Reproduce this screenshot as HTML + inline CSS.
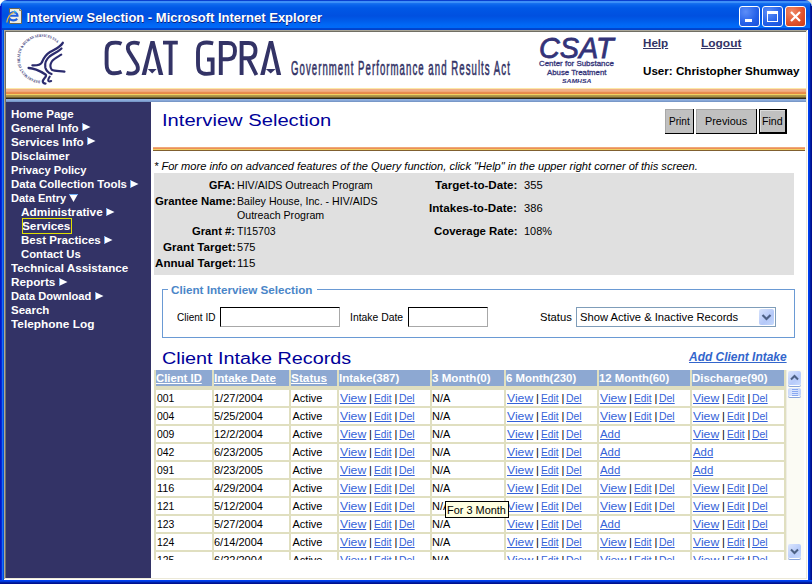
<!DOCTYPE html>
<html><head><meta charset="utf-8"><title>Interview Selection</title>
<style>
html,body{margin:0;padding:0;}
body{width:812px;height:584px;position:relative;overflow:hidden;background:#fff;font-family:"Liberation Sans",sans-serif;font-size:11px;color:#000;}
.r{position:absolute;box-sizing:content-box;}
.t{position:absolute;white-space:nowrap;}
.a{color:#3355cc;text-decoration:underline;}
</style></head><body>
<div class="r" style="left:804px;top:0px;width:8px;height:8px;background:#ece9d8"></div>
<div class="r" style="left:0px;top:0px;width:812px;height:30px;background:linear-gradient(to bottom,#0a3fcf 0px,#0a3fcf 1px,#3d8ff8 1px,#3d8ff8 3px,#1a74f0 3px,#0a64ec 5px,#0058e6 8px,#0050e0 16px,#005ae8 20px,#0068f6 25px,#006af8 28px,#0048d4 28px,#0040c8 30px);border-radius:7px 7px 0 0;"></div>
<div class="r" style="left:0px;top:6px;width:1px;height:578px;background:#0018c8"></div>
<div class="r" style="left:1px;top:4px;width:1px;height:580px;background:#0828d4"></div>
<div class="r" style="left:2px;top:30px;width:1px;height:554px;background:#1a6ef2"></div>
<div class="r" style="left:3px;top:30px;width:1px;height:554px;background:#0050e0"></div>
<div class="r" style="left:808px;top:30px;width:1px;height:554px;background:#0040f0"></div>
<div class="r" style="left:809px;top:30px;width:1px;height:554px;background:#0036d8"></div>
<div class="r" style="left:810px;top:4px;width:1px;height:580px;background:#0020a4"></div>
<div class="r" style="left:811px;top:6px;width:1px;height:578px;background:#001090"></div>
<div class="r" style="left:0px;top:580px;width:812px;height:1px;background:#0040f0"></div>
<div class="r" style="left:0px;top:581px;width:812px;height:1px;background:#0036d8"></div>
<div class="r" style="left:0px;top:582px;width:812px;height:1px;background:#0020a4"></div>
<div class="r" style="left:0px;top:583px;width:812px;height:1px;background:#001090"></div>
<div class="r" style="left:4px;top:30px;width:804px;height:1px;background:#aca899"></div>
<div class="r" style="left:4px;top:31px;width:803px;height:1px;background:#716f64"></div>
<div class="r" style="left:4px;top:30px;width:1px;height:550px;background:#aca899"></div>
<div class="r" style="left:5px;top:31px;width:1px;height:548px;background:#716f64"></div>
<div class="r" style="left:806px;top:31px;width:1px;height:548px;background:#ece9d8"></div>
<div class="r" style="left:807px;top:30px;width:1px;height:550px;background:#ffffff"></div>
<div class="r" style="left:5px;top:578px;width:802px;height:1px;background:#ece9d8"></div>
<div class="r" style="left:4px;top:579px;width:804px;height:1px;background:#ffffff"></div>
<div class="r" style="left:6px;top:32px;width:800px;height:546px;background:#fff"></div>
<svg class="r" style="left:2px;top:4px" width="24" height="24" viewBox="0 0 24 24">
<path d="M7.5 4.5 H17.5 L19.5 6.5 V19.5 H7.5 Z" fill="#efede2" stroke="#6b6753" stroke-width="1"/>
<path d="M17.5 4.5 V6.5 H19.5" fill="#fff" stroke="#6b6753" stroke-width="0.8"/>
<path d="M15.2 14.8 C13.5 16.8 9.5 17 7.8 15 C6 12.8 7 9 10.5 8.3 C13.5 7.8 15.5 9.5 15.5 11.8 H7.2" fill="none" stroke="#1f5ee0" stroke-width="2.1"/>
<path d="M4.8 18.5 C5.5 13.5 8.5 9.5 12.5 8" fill="none" stroke="#e0b840" stroke-width="1.2"/>
<path d="M12 6.8 L14.5 8.5" stroke="#30c0f0" stroke-width="1.2"/>
</svg>
<div class="t" style="left:27px;top:11px;font-size:13px;line-height:15px;color:#0a1e80;font-weight:bold;">Interview Selection - Microsoft Internet Explorer</div>
<div class="t" style="left:26.5px;top:10px;font-size:13px;line-height:15px;color:#fff;font-weight:bold;">Interview Selection - Microsoft Internet Explorer</div>
<div class="r" style="left:739px;top:6px;width:19px;height:19px;border:1px solid #fff;border-radius:3px;background:radial-gradient(circle at 30% 25%,#5d8ef8,#2460e8 60%,#1a50d8)"><div class="r" style="left:5px;top:12px;width:7px;height:3px;background:#fff"></div></div>
<div class="r" style="left:762px;top:6px;width:19px;height:19px;border:1px solid #fff;border-radius:3px;background:radial-gradient(circle at 30% 25%,#5d8ef8,#2460e8 60%,#1a50d8)"><div class="r" style="left:4px;top:4px;width:9px;height:7px;border:1px solid #fff;border-top-width:3px;"></div></div>
<div class="r" style="left:785px;top:6px;width:19px;height:19px;border:1px solid #fff;border-radius:3px;background:radial-gradient(circle at 30% 25%,#f08a68,#e0502a 60%,#c83c18)"><svg class="r" style="left:0;top:0" width="19" height="19"><path d="M5 5 L14 14 M14 5 L5 14" stroke="#fff" stroke-width="2.2"/></svg></div>
<svg class="r" style="left:10px;top:32px" width="60" height="56" viewBox="0 0 60 56">
<defs><path id="hhsring" d="M30.1 48.7 A22 22 0 1 1 48.3 12.1"/></defs>
<text font-family="Liberation Serif" font-size="4" font-weight="bold" fill="#2b2b6e"><textPath href="#hhsring" textLength="84" lengthAdjust="spacingAndGlyphs">DEPARTMENT OF HEALTH &amp; HUMAN SERVICES USA</textPath></text>
<g fill="none" stroke="#2b2b6e" stroke-linecap="round">
<path d="M22.4 33.4 C26 33.5 30 33.8 31.8 30.5 C33.2 27 35 23 40 20 C45 17 50 15.5 52.8 10.8" stroke-width="2.3"/>
<path d="M51.5 16.5 C48 20 43.5 21.5 39.5 24.5 C36 27.5 34.6 31.5 35.3 35.5 C36 38.5 38 40.5 41.5 42" stroke-width="2.2"/>
<path d="M51.3 22.7 C47.5 25 44 26.5 41.8 29.5 C40 32.5 40 35.5 41.8 37.8 C45 39.5 50 38.8 54.5 39.6" stroke-width="2.1"/>
<path d="M18.6 36 C23 36 30 39 35.5 42.5 C37.5 44 33.5 46.5 32.8 49 C32.5 50.5 34 51.6 35.5 51.6" stroke-width="2.3"/>
<path d="M39.8 44.5 C38.8 46 37.6 47.8 38.4 49 C39.2 49.6 40.5 49.3 41.2 49" stroke-width="2"/>
</g>
</svg>
<svg class="r" style="left:0;top:0" width="300" height="88" viewBox="0 0 300 88">
<g fill="none" stroke="#333366" stroke-width="3.9" stroke-linecap="butt">
<path d="M121.5 43.8 C118 42.2 114.5 42.5 111.5 43 C107.5 44 106.6 47 106.6 52 V64 C106.6 69 107.5 72 111.5 73 C114.5 73.6 118 73.4 121.5 71.8"/>
<path d="M139.5 43.6 C135.5 42.3 131.5 42.4 129.5 44 C127.5 45.5 127.6 48.5 128.6 51 L137.2 65 C138.4 68 138 71 135.5 72.5 C133 74 129.5 73.8 126.5 72.8"/>
<path d="M281 74.5 L271 41 M260 74.5 L270.6 41" stroke-width="0"/>
<path d="M207 59.5 H212.6 V73.2 C208 74.2 202 74 199.8 71.5 C198.3 70 198 67 198 63 V52 C198 47 199 44.5 201.5 43.5 C204.5 42.2 209 42.4 213.2 43.4"/>
<path d="M220.8 75 V43 H228 C233.5 43 235 46 235 51 C235 56 233.5 59.2 228 59.2 H220.8"/>
<path d="M241.6 75 V43 H248.5 C254 43 255.5 46 255.5 50.5 C255.5 55 254 58.2 248.5 58.2 H241.6 M248 58.2 L256.4 75"/>
<path d="M163 42.6 H177.8 M170.6 42.6 V75"/>
</g>
<g fill="#333366">
<path d="M150.5 41 H154.5 L163.3 75 H158.8 L152.3 48 L146 75 H141.6 Z"/>
<path d="M147.8 69 H156.6 L152.2 73.5 Z"/>
<path d="M268.9 41 H273 L281.2 75 H276.8 L270.8 48 L264.6 75 H260.2 Z"/>
<path d="M265.8 69 H275.6 L270.7 73.5 Z"/>
</g>
</svg>
<div class="t" style="left:291px;top:57px;font-size:20px;line-height:22px;color:#333366;letter-spacing:2.2px;transform:scaleX(0.4799);transform-origin:0 0;-webkit-text-stroke:0.6px #333366;">Government Performance and Results Act</div>
<div class="t" style="left:539px;top:32px;font-size:29px;line-height:32px;color:#333378;font-style:italic;transform:scaleX(0.9933);transform-origin:0 0;-webkit-text-stroke:0.8px #333378;">CSAT</div>
<div class="t" style="left:539px;top:59px;font-size:8px;line-height:9px;color:#333378;transform:scaleX(0.9893);transform-origin:0 0;-webkit-text-stroke:0.3px #333378;">Center for Substance</div>
<div class="t" style="left:547px;top:68px;font-size:8px;line-height:9px;color:#333378;transform:scaleX(0.9750);transform-origin:0 0;-webkit-text-stroke:0.3px #333378;">Abuse Treatment</div>
<div class="t" style="left:562px;top:78px;font-size:6px;line-height:6px;color:#333378;font-weight:bold;font-style:italic;transform:scaleX(1.1339);transform-origin:0 0;">SAMHSA</div>
<div class="t" style="left:643px;top:37px;font-size:11px;line-height:12px;color:#333366;font-weight:bold;transform:scaleX(1.0569);transform-origin:0 0;text-decoration:underline;">Help</div>
<div class="t" style="left:701px;top:37px;font-size:11px;line-height:12px;color:#333366;font-weight:bold;transform:scaleX(1.0841);transform-origin:0 0;text-decoration:underline;">Logout</div>
<div class="t" style="left:643px;top:65px;font-size:11px;line-height:12px;color:#000;font-weight:bold;transform:scaleX(1.0573);transform-origin:0 0;">User: Christopher Shumway</div>
<div class="r" style="left:6px;top:88px;width:800px;height:1px;background:#fce8a8"></div>
<div class="r" style="left:6px;top:89px;width:800px;height:1px;background:#f0b088"></div>
<div class="r" style="left:6px;top:90px;width:800px;height:1px;background:#f0b088"></div>
<div class="r" style="left:6px;top:91px;width:800px;height:1px;background:#f0a878"></div>
<div class="r" style="left:6px;top:92px;width:800px;height:1px;background:#e88c50"></div>
<div class="r" style="left:6px;top:93px;width:800px;height:1px;background:#e88848"></div>
<div class="r" style="left:6px;top:94px;width:800px;height:1px;background:#f0d060"></div>
<div class="r" style="left:6px;top:95px;width:800px;height:1px;background:#b09850"></div>
<div class="r" style="left:6px;top:96px;width:800px;height:1px;background:#a89040"></div>
<div class="r" style="left:6px;top:97px;width:800px;height:1px;background:#706030"></div>
<div class="r" style="left:6px;top:98px;width:800px;height:1px;background:#302818"></div>
<div class="r" style="left:6px;top:99px;width:800px;height:1px;background:#90b0e0"></div>
<div class="r" style="left:6px;top:100px;width:800px;height:1px;background:#88a8d8"></div>
<div class="r" style="left:6px;top:101px;width:800px;height:1px;background:#7898c8"></div>
<div class="r" style="left:6px;top:102px;width:145px;height:476px;background:#333366"></div>
<div class="t" style="left:11px;top:108px;font-size:11px;line-height:12px;color:#fff;font-weight:bold;transform:scaleX(1.0480);transform-origin:0 0;">Home Page</div>
<div class="t" style="left:11px;top:122px;font-size:11px;line-height:12px;color:#fff;font-weight:bold;transform:scaleX(1.0547);transform-origin:0 0;">General Info</div>
<svg class="r" style="left:82px;top:123px" width="9" height="8"><path d="M0 0 L8.5 4 L0 8 Z" fill="#fff"/><path d="M0.5 0 V8" stroke="#70b0f8" stroke-width="1"/></svg>
<div class="t" style="left:11px;top:136px;font-size:11px;line-height:12px;color:#fff;font-weight:bold;transform:scaleX(1.0616);transform-origin:0 0;">Services Info</div>
<svg class="r" style="left:87px;top:137px" width="9" height="8"><path d="M0 0 L8.5 4 L0 8 Z" fill="#fff"/><path d="M0.5 0 V8" stroke="#70b0f8" stroke-width="1"/></svg>
<div class="t" style="left:11px;top:150px;font-size:11px;line-height:12px;color:#fff;font-weight:bold;transform:scaleX(1.0493);transform-origin:0 0;">Disclaimer</div>
<div class="t" style="left:11px;top:164px;font-size:11px;line-height:12px;color:#fff;font-weight:bold;transform:scaleX(1.0119);transform-origin:0 0;">Privacy Policy</div>
<div class="t" style="left:11px;top:178px;font-size:11px;line-height:12px;color:#fff;font-weight:bold;transform:scaleX(1.0382);transform-origin:0 0;">Data Collection Tools</div>
<svg class="r" style="left:130px;top:180px" width="9" height="8"><path d="M0 0 L8.5 4 L0 8 Z" fill="#fff"/><path d="M0.5 0 V8" stroke="#70b0f8" stroke-width="1"/></svg>
<div class="t" style="left:11px;top:192px;font-size:11px;line-height:12px;color:#fff;font-weight:bold;transform:scaleX(1.0012);transform-origin:0 0;">Data Entry</div>
<svg class="r" style="left:69px;top:194px" width="9" height="8"><path d="M0 0 H9 L4.5 8 Z" fill="#fff"/><path d="M0 0.5 H9" stroke="#70b0f8" stroke-width="1"/></svg>
<div class="t" style="left:21px;top:206px;font-size:11px;line-height:12px;color:#fff;font-weight:bold;transform:scaleX(1.0691);transform-origin:0 0;">Administrative</div>
<svg class="r" style="left:106px;top:208px" width="9" height="8"><path d="M0 0 L8.5 4 L0 8 Z" fill="#fff"/><path d="M0.5 0 V8" stroke="#70b0f8" stroke-width="1"/></svg>
<div class="t" style="left:22px;top:220px;font-size:11px;line-height:12px;color:#fff;font-weight:bold;transform:scaleX(1.0692);transform-origin:0 0;">Services</div>
<div class="t" style="left:21px;top:234px;font-size:11px;line-height:12px;color:#fff;font-weight:bold;transform:scaleX(1.0524);transform-origin:0 0;">Best Practices</div>
<svg class="r" style="left:104px;top:236px" width="9" height="8"><path d="M0 0 L8.5 4 L0 8 Z" fill="#fff"/><path d="M0.5 0 V8" stroke="#70b0f8" stroke-width="1"/></svg>
<div class="t" style="left:21px;top:248px;font-size:11px;line-height:12px;color:#fff;font-weight:bold;transform:scaleX(1.0282);transform-origin:0 0;">Contact Us</div>
<div class="t" style="left:11px;top:262px;font-size:11px;line-height:12px;color:#fff;font-weight:bold;transform:scaleX(1.0599);transform-origin:0 0;">Technical Assistance</div>
<div class="t" style="left:11px;top:276px;font-size:11px;line-height:12px;color:#fff;font-weight:bold;transform:scaleX(1.0659);transform-origin:0 0;">Reports</div>
<svg class="r" style="left:59px;top:278px" width="9" height="8"><path d="M0 0 L8.5 4 L0 8 Z" fill="#fff"/><path d="M0.5 0 V8" stroke="#70b0f8" stroke-width="1"/></svg>
<div class="t" style="left:11px;top:290px;font-size:11px;line-height:12px;color:#fff;font-weight:bold;transform:scaleX(1.0107);transform-origin:0 0;">Data Download</div>
<svg class="r" style="left:95px;top:292px" width="9" height="8"><path d="M0 0 L8.5 4 L0 8 Z" fill="#fff"/><path d="M0.5 0 V8" stroke="#70b0f8" stroke-width="1"/></svg>
<div class="t" style="left:11px;top:304px;font-size:11px;line-height:12px;color:#fff;font-weight:bold;transform:scaleX(1.0462);transform-origin:0 0;">Search</div>
<div class="t" style="left:11px;top:318px;font-size:11px;line-height:12px;color:#fff;font-weight:bold;transform:scaleX(1.0774);transform-origin:0 0;">Telephone Log</div>
<div class="r" style="left:22px;top:218px;width:48px;height:14px;border:1px solid #e0e000;"></div>
<div class="t" style="left:162px;top:112px;font-size:16px;line-height:17px;color:#000099;transform:scaleX(1.2599);transform-origin:0 0;">Interview Selection</div>
<div class="r" style="left:665px;top:109px;width:29px;height:25px;background:#c0c0c0;box-shadow:inset -1px -1px 0 #000, inset 1px 1px 0 #a8a8a8"></div>
<div class="t" style="left:668.5px;top:115px;font-size:11px;line-height:12px;color:#000;transform:scaleX(0.9149);transform-origin:0 0;">Print</div>
<div class="r" style="left:696px;top:109px;width:61px;height:25px;background:#c0c0c0;box-shadow:inset -1px -1px 0 #000, inset 1px 1px 0 #a8a8a8"></div>
<div class="t" style="left:704.5px;top:115px;font-size:11px;line-height:12px;color:#000;transform:scaleX(0.9861);transform-origin:0 0;">Previous</div>
<div class="r" style="left:759px;top:109px;width:25px;height:22px;background:#c0c0c0;border:1px solid #000;border-right-width:2px;border-bottom-width:2px;box-shadow:inset 1px 1px 0 #dcdcdc"></div>
<div class="t" style="left:762px;top:115px;font-size:11px;line-height:12px;color:#000;transform:scaleX(0.9670);transform-origin:0 0;">Find</div>
<div class="r" style="left:153px;top:147px;width:652px;height:1px;background:#f0a878"></div>
<div class="r" style="left:153px;top:148px;width:652px;height:1px;background:#ec9058"></div>
<div class="r" style="left:153px;top:149px;width:652px;height:1px;background:#f0d060"></div>
<div class="r" style="left:153px;top:150px;width:652px;height:1px;background:#806030"></div>
<div class="t" style="left:154px;top:160px;font-size:11px;line-height:12px;color:#000;font-style:italic;transform:scaleX(1.0085);transform-origin:0 0;">* For more info on advanced features of the Query function, click "Help" in the upper right corner of this screen.</div>
<div class="r" style="left:154px;top:173px;width:640px;height:102px;background:#e0e0e0"></div>
<div class="t" style="left:209px;top:179px;font-size:11px;line-height:12px;color:#000;font-weight:bold;transform:scaleX(0.9817);transform-origin:0 0;">GFA:</div>
<div class="t" style="left:155px;top:195px;font-size:11px;line-height:12px;color:#000;font-weight:bold;transform:scaleX(1.0324);transform-origin:0 0;">Grantee Name:</div>
<div class="t" style="left:192px;top:225px;font-size:11px;line-height:12px;color:#000;font-weight:bold;transform:scaleX(1.0193);transform-origin:0 0;">Grant #:</div>
<div class="t" style="left:163px;top:241px;font-size:11px;line-height:12px;color:#000;font-weight:bold;transform:scaleX(1.0572);transform-origin:0 0;">Grant Target:</div>
<div class="t" style="left:155px;top:257px;font-size:11px;line-height:12px;color:#000;font-weight:bold;transform:scaleX(1.0547);transform-origin:0 0;">Annual Target:</div>
<div class="t" style="left:237px;top:179px;font-size:11px;line-height:12px;color:#000;transform:scaleX(0.9651);transform-origin:0 0;">HIV/AIDS Outreach Program</div>
<div class="t" style="left:237px;top:195px;font-size:11px;line-height:12px;color:#000;transform:scaleX(0.9656);transform-origin:0 0;">Bailey House, Inc. - HIV/AIDS</div>
<div class="t" style="left:237px;top:209px;font-size:11px;line-height:12px;color:#000;transform:scaleX(0.9637);transform-origin:0 0;">Outreach Program</div>
<div class="t" style="left:237px;top:225px;font-size:11px;line-height:12px;color:#000;transform:scaleX(0.9585);transform-origin:0 0;">TI15703</div>
<div class="t" style="left:237px;top:241px;font-size:11px;line-height:12px;color:#000;transform:scaleX(1.0022);transform-origin:0 0;">575</div>
<div class="t" style="left:237px;top:257px;font-size:11px;line-height:12px;color:#000;transform:scaleX(1.0486);transform-origin:0 0;">115</div>
<div class="t" style="left:435px;top:179px;font-size:11px;line-height:12px;color:#000;font-weight:bold;transform:scaleX(1.0562);transform-origin:0 0;">Target-to-Date:</div>
<div class="t" style="left:429px;top:202px;font-size:11px;line-height:12px;color:#000;font-weight:bold;transform:scaleX(1.0574);transform-origin:0 0;">Intakes-to-Date:</div>
<div class="t" style="left:434px;top:225px;font-size:11px;line-height:12px;color:#000;font-weight:bold;transform:scaleX(1.0359);transform-origin:0 0;">Coverage Rate:</div>
<div class="t" style="left:524px;top:179px;font-size:11px;line-height:12px;color:#000;transform:scaleX(1.0131);transform-origin:0 0;">355</div>
<div class="t" style="left:524px;top:202px;font-size:11px;line-height:12px;color:#000;transform:scaleX(1.0131);transform-origin:0 0;">386</div>
<div class="t" style="left:524px;top:225px;font-size:11px;line-height:12px;color:#000;transform:scaleX(0.9950);transform-origin:0 0;">108%</div>
<div class="r" style="left:162px;top:289px;width:631px;height:47px;border:1px solid #6a9ad4;"></div>
<div class="r" style="left:168px;top:287px;width:149px;height:5px;background:#fff"></div>
<div class="t" style="left:171px;top:284px;font-size:11px;line-height:12px;color:#4a86c8;font-weight:bold;transform:scaleX(1.0610);transform-origin:0 0;">Client Interview Selection</div>
<div class="t" style="left:177px;top:311px;font-size:11px;line-height:12px;color:#000;transform:scaleX(0.9102);transform-origin:0 0;">Client ID</div>
<div class="r" style="left:220px;top:307px;width:118px;height:18px;border:1px solid;border-color:#000 #a8a8a8 #a8a8a8 #000;background:#fff"></div>
<div class="t" style="left:350px;top:311px;font-size:11px;line-height:12px;color:#000;transform:scaleX(0.9437);transform-origin:0 0;">Intake Date</div>
<div class="r" style="left:408px;top:307px;width:78px;height:18px;border:1px solid;border-color:#000 #a8a8a8 #a8a8a8 #000;background:#fff"></div>
<div class="t" style="left:540px;top:311px;font-size:11px;line-height:12px;color:#000;transform:scaleX(1.0196);transform-origin:0 0;">Status</div>
<div class="r" style="left:576px;top:307px;width:198px;height:18px;border:1px solid #7f9db9;background:#fff"></div>
<div class="t" style="left:580px;top:311px;font-size:11px;line-height:12px;color:#000;transform:scaleX(1.0187);transform-origin:0 0;">Show Active &amp; Inactive Records</div>
<div class="r" style="left:759px;top:309px;width:15px;height:16px;border-radius:2px;background:linear-gradient(135deg,#d8e4fc,#b4c8f8 60%,#c4d8fc)"><svg class="r" style="left:0;top:0" width="15" height="16"><path d="M3.5 6 L7.5 10 L11.5 6" fill="none" stroke="#4d6185" stroke-width="2.2"/></svg></div>
<div class="t" style="left:162px;top:350px;font-size:16px;line-height:17px;color:#000099;transform:scaleX(1.2369);transform-origin:0 0;">Client Intake Records</div>
<div class="t" style="left:689px;top:350px;font-size:12px;line-height:14px;color:#3366cc;font-weight:bold;font-style:italic;transform:scaleX(0.9958);transform-origin:0 0;text-decoration:underline;">Add Client Intake</div>
<div class="r" style="left:154px;top:370px;width:632px;height:190px;background:#e0dfc0"></div>
<div class="r" style="left:156px;top:370px;width:56px;height:16px;background:#8da8d2"></div>
<div class="t" style="left:156px;top:372px;font-size:11px;line-height:12px;color:#fff;font-weight:bold;transform:scaleX(1.0263);transform-origin:0 0;text-decoration:underline;">Client ID</div>
<div class="r" style="left:214px;top:370px;width:75px;height:16px;background:#8da8d2"></div>
<div class="t" style="left:214px;top:372px;font-size:11px;line-height:12px;color:#fff;font-weight:bold;transform:scaleX(1.0545);transform-origin:0 0;text-decoration:underline;">Intake Date</div>
<div class="r" style="left:291px;top:370px;width:46px;height:16px;background:#8da8d2"></div>
<div class="t" style="left:291px;top:372px;font-size:11px;line-height:12px;color:#fff;font-weight:bold;transform:scaleX(1.0736);transform-origin:0 0;text-decoration:underline;">Status</div>
<div class="r" style="left:339px;top:370px;width:91px;height:16px;background:#8da8d2"></div>
<div class="t" style="left:339px;top:372px;font-size:11px;line-height:12px;color:#fff;font-weight:bold;transform:scaleX(1.0507);transform-origin:0 0;">Intake(387)</div>
<div class="r" style="left:432px;top:370px;width:72px;height:16px;background:#8da8d2"></div>
<div class="t" style="left:432px;top:372px;font-size:11px;line-height:12px;color:#fff;font-weight:bold;transform:scaleX(1.0538);transform-origin:0 0;">3 Month(0)</div>
<div class="r" style="left:506px;top:370px;width:91px;height:16px;background:#8da8d2"></div>
<div class="t" style="left:506px;top:372px;font-size:11px;line-height:12px;color:#fff;font-weight:bold;transform:scaleX(1.0347);transform-origin:0 0;">6 Month(230)</div>
<div class="r" style="left:599px;top:370px;width:91px;height:16px;background:#8da8d2"></div>
<div class="t" style="left:599px;top:372px;font-size:11px;line-height:12px;color:#fff;font-weight:bold;transform:scaleX(1.0347);transform-origin:0 0;">12 Month(60)</div>
<div class="r" style="left:692px;top:370px;width:92px;height:16px;background:#8da8d2"></div>
<div class="t" style="left:692px;top:372px;font-size:11px;line-height:12px;color:#fff;font-weight:bold;transform:scaleX(1.0376);transform-origin:0 0;">Discharge(90)</div>
<div class="r" style="left:0;top:0;width:812px;height:560px;overflow:hidden">
<div class="r" style="left:156px;top:390px;width:56px;height:16px;background:#fff"></div>
<div class="r" style="left:214px;top:390px;width:75px;height:16px;background:#fff"></div>
<div class="r" style="left:291px;top:390px;width:46px;height:16px;background:#fff"></div>
<div class="r" style="left:339px;top:390px;width:91px;height:16px;background:#fff"></div>
<div class="r" style="left:432px;top:390px;width:72px;height:16px;background:#fff"></div>
<div class="r" style="left:506px;top:390px;width:91px;height:16px;background:#fff"></div>
<div class="r" style="left:599px;top:390px;width:91px;height:16px;background:#fff"></div>
<div class="r" style="left:692px;top:390px;width:92px;height:16px;background:#fff"></div>
<div class="t" style="left:156.5px;top:392px;font-size:11px;line-height:12px;color:#000;transform:scaleX(0.9477);transform-origin:0 0;">001</div>
<div class="t" style="left:214px;top:392px;font-size:11px;line-height:12px;color:#000;">1/27/2004</div>
<div class="t" style="left:292.5px;top:392px;font-size:11px;line-height:12px;color:#000;">Active</div>
<div class="t" style="left:339.5px;top:392px;font-size:11px;line-height:12px;color:#3462d8;transform:scaleX(1.1075);transform-origin:0 0;text-decoration:underline;">View</div>
<div class="t" style="left:369px;top:392px;font-size:11px;line-height:12px;color:#000;">|</div>
<div class="t" style="left:373.5px;top:392px;font-size:11px;line-height:12px;color:#3462d8;transform:scaleX(0.9226);transform-origin:0 0;text-decoration:underline;">Edit</div>
<div class="t" style="left:394.5px;top:392px;font-size:11px;line-height:12px;color:#000;">|</div>
<div class="t" style="left:398.5px;top:392px;font-size:11px;line-height:12px;color:#3462d8;transform:scaleX(0.9506);transform-origin:0 0;text-decoration:underline;">Del</div>
<div class="t" style="left:432px;top:392px;font-size:11px;line-height:12px;color:#000;">N/A</div>
<div class="t" style="left:506.5px;top:392px;font-size:11px;line-height:12px;color:#3462d8;transform:scaleX(1.1075);transform-origin:0 0;text-decoration:underline;">View</div>
<div class="t" style="left:536px;top:392px;font-size:11px;line-height:12px;color:#000;">|</div>
<div class="t" style="left:540.5px;top:392px;font-size:11px;line-height:12px;color:#3462d8;transform:scaleX(0.9226);transform-origin:0 0;text-decoration:underline;">Edit</div>
<div class="t" style="left:561.5px;top:392px;font-size:11px;line-height:12px;color:#000;">|</div>
<div class="t" style="left:565.5px;top:392px;font-size:11px;line-height:12px;color:#3462d8;transform:scaleX(0.9506);transform-origin:0 0;text-decoration:underline;">Del</div>
<div class="t" style="left:599.5px;top:392px;font-size:11px;line-height:12px;color:#3462d8;transform:scaleX(1.1075);transform-origin:0 0;text-decoration:underline;">View</div>
<div class="t" style="left:629px;top:392px;font-size:11px;line-height:12px;color:#000;">|</div>
<div class="t" style="left:633.5px;top:392px;font-size:11px;line-height:12px;color:#3462d8;transform:scaleX(0.9226);transform-origin:0 0;text-decoration:underline;">Edit</div>
<div class="t" style="left:654.5px;top:392px;font-size:11px;line-height:12px;color:#000;">|</div>
<div class="t" style="left:658.5px;top:392px;font-size:11px;line-height:12px;color:#3462d8;transform:scaleX(0.9506);transform-origin:0 0;text-decoration:underline;">Del</div>
<div class="t" style="left:692.5px;top:392px;font-size:11px;line-height:12px;color:#3462d8;transform:scaleX(1.1075);transform-origin:0 0;text-decoration:underline;">View</div>
<div class="t" style="left:722px;top:392px;font-size:11px;line-height:12px;color:#000;">|</div>
<div class="t" style="left:726.5px;top:392px;font-size:11px;line-height:12px;color:#3462d8;transform:scaleX(0.9226);transform-origin:0 0;text-decoration:underline;">Edit</div>
<div class="t" style="left:747.5px;top:392px;font-size:11px;line-height:12px;color:#000;">|</div>
<div class="t" style="left:751.5px;top:392px;font-size:11px;line-height:12px;color:#3462d8;transform:scaleX(0.9506);transform-origin:0 0;text-decoration:underline;">Del</div>
<div class="r" style="left:156px;top:408px;width:56px;height:16px;background:#fff"></div>
<div class="r" style="left:214px;top:408px;width:75px;height:16px;background:#fff"></div>
<div class="r" style="left:291px;top:408px;width:46px;height:16px;background:#fff"></div>
<div class="r" style="left:339px;top:408px;width:91px;height:16px;background:#fff"></div>
<div class="r" style="left:432px;top:408px;width:72px;height:16px;background:#fff"></div>
<div class="r" style="left:506px;top:408px;width:91px;height:16px;background:#fff"></div>
<div class="r" style="left:599px;top:408px;width:91px;height:16px;background:#fff"></div>
<div class="r" style="left:692px;top:408px;width:92px;height:16px;background:#fff"></div>
<div class="t" style="left:156.5px;top:410px;font-size:11px;line-height:12px;color:#000;transform:scaleX(0.9477);transform-origin:0 0;">004</div>
<div class="t" style="left:214px;top:410px;font-size:11px;line-height:12px;color:#000;">5/25/2004</div>
<div class="t" style="left:292.5px;top:410px;font-size:11px;line-height:12px;color:#000;">Active</div>
<div class="t" style="left:339.5px;top:410px;font-size:11px;line-height:12px;color:#3462d8;transform:scaleX(1.1075);transform-origin:0 0;text-decoration:underline;">View</div>
<div class="t" style="left:369px;top:410px;font-size:11px;line-height:12px;color:#000;">|</div>
<div class="t" style="left:373.5px;top:410px;font-size:11px;line-height:12px;color:#3462d8;transform:scaleX(0.9226);transform-origin:0 0;text-decoration:underline;">Edit</div>
<div class="t" style="left:394.5px;top:410px;font-size:11px;line-height:12px;color:#000;">|</div>
<div class="t" style="left:398.5px;top:410px;font-size:11px;line-height:12px;color:#3462d8;transform:scaleX(0.9506);transform-origin:0 0;text-decoration:underline;">Del</div>
<div class="t" style="left:432px;top:410px;font-size:11px;line-height:12px;color:#000;">N/A</div>
<div class="t" style="left:506.5px;top:410px;font-size:11px;line-height:12px;color:#3462d8;transform:scaleX(1.1075);transform-origin:0 0;text-decoration:underline;">View</div>
<div class="t" style="left:536px;top:410px;font-size:11px;line-height:12px;color:#000;">|</div>
<div class="t" style="left:540.5px;top:410px;font-size:11px;line-height:12px;color:#3462d8;transform:scaleX(0.9226);transform-origin:0 0;text-decoration:underline;">Edit</div>
<div class="t" style="left:561.5px;top:410px;font-size:11px;line-height:12px;color:#000;">|</div>
<div class="t" style="left:565.5px;top:410px;font-size:11px;line-height:12px;color:#3462d8;transform:scaleX(0.9506);transform-origin:0 0;text-decoration:underline;">Del</div>
<div class="t" style="left:599.5px;top:410px;font-size:11px;line-height:12px;color:#3462d8;transform:scaleX(1.1075);transform-origin:0 0;text-decoration:underline;">View</div>
<div class="t" style="left:629px;top:410px;font-size:11px;line-height:12px;color:#000;">|</div>
<div class="t" style="left:633.5px;top:410px;font-size:11px;line-height:12px;color:#3462d8;transform:scaleX(0.9226);transform-origin:0 0;text-decoration:underline;">Edit</div>
<div class="t" style="left:654.5px;top:410px;font-size:11px;line-height:12px;color:#000;">|</div>
<div class="t" style="left:658.5px;top:410px;font-size:11px;line-height:12px;color:#3462d8;transform:scaleX(0.9506);transform-origin:0 0;text-decoration:underline;">Del</div>
<div class="t" style="left:692.5px;top:410px;font-size:11px;line-height:12px;color:#3462d8;transform:scaleX(1.1075);transform-origin:0 0;text-decoration:underline;">View</div>
<div class="t" style="left:722px;top:410px;font-size:11px;line-height:12px;color:#000;">|</div>
<div class="t" style="left:726.5px;top:410px;font-size:11px;line-height:12px;color:#3462d8;transform:scaleX(0.9226);transform-origin:0 0;text-decoration:underline;">Edit</div>
<div class="t" style="left:747.5px;top:410px;font-size:11px;line-height:12px;color:#000;">|</div>
<div class="t" style="left:751.5px;top:410px;font-size:11px;line-height:12px;color:#3462d8;transform:scaleX(0.9506);transform-origin:0 0;text-decoration:underline;">Del</div>
<div class="r" style="left:156px;top:426px;width:56px;height:16px;background:#fff"></div>
<div class="r" style="left:214px;top:426px;width:75px;height:16px;background:#fff"></div>
<div class="r" style="left:291px;top:426px;width:46px;height:16px;background:#fff"></div>
<div class="r" style="left:339px;top:426px;width:91px;height:16px;background:#fff"></div>
<div class="r" style="left:432px;top:426px;width:72px;height:16px;background:#fff"></div>
<div class="r" style="left:506px;top:426px;width:91px;height:16px;background:#fff"></div>
<div class="r" style="left:599px;top:426px;width:91px;height:16px;background:#fff"></div>
<div class="r" style="left:692px;top:426px;width:92px;height:16px;background:#fff"></div>
<div class="t" style="left:156.5px;top:428px;font-size:11px;line-height:12px;color:#000;transform:scaleX(0.9477);transform-origin:0 0;">009</div>
<div class="t" style="left:214px;top:428px;font-size:11px;line-height:12px;color:#000;">12/2/2004</div>
<div class="t" style="left:292.5px;top:428px;font-size:11px;line-height:12px;color:#000;">Active</div>
<div class="t" style="left:339.5px;top:428px;font-size:11px;line-height:12px;color:#3462d8;transform:scaleX(1.1075);transform-origin:0 0;text-decoration:underline;">View</div>
<div class="t" style="left:369px;top:428px;font-size:11px;line-height:12px;color:#000;">|</div>
<div class="t" style="left:373.5px;top:428px;font-size:11px;line-height:12px;color:#3462d8;transform:scaleX(0.9226);transform-origin:0 0;text-decoration:underline;">Edit</div>
<div class="t" style="left:394.5px;top:428px;font-size:11px;line-height:12px;color:#000;">|</div>
<div class="t" style="left:398.5px;top:428px;font-size:11px;line-height:12px;color:#3462d8;transform:scaleX(0.9506);transform-origin:0 0;text-decoration:underline;">Del</div>
<div class="t" style="left:432px;top:428px;font-size:11px;line-height:12px;color:#000;">N/A</div>
<div class="t" style="left:506.5px;top:428px;font-size:11px;line-height:12px;color:#3462d8;transform:scaleX(1.1075);transform-origin:0 0;text-decoration:underline;">View</div>
<div class="t" style="left:536px;top:428px;font-size:11px;line-height:12px;color:#000;">|</div>
<div class="t" style="left:540.5px;top:428px;font-size:11px;line-height:12px;color:#3462d8;transform:scaleX(0.9226);transform-origin:0 0;text-decoration:underline;">Edit</div>
<div class="t" style="left:561.5px;top:428px;font-size:11px;line-height:12px;color:#000;">|</div>
<div class="t" style="left:565.5px;top:428px;font-size:11px;line-height:12px;color:#3462d8;transform:scaleX(0.9506);transform-origin:0 0;text-decoration:underline;">Del</div>
<div class="t" style="left:599.5px;top:428px;font-size:11px;line-height:12px;color:#3462d8;transform:scaleX(1.0318);transform-origin:0 0;text-decoration:underline;">Add</div>
<div class="t" style="left:692.5px;top:428px;font-size:11px;line-height:12px;color:#3462d8;transform:scaleX(1.1075);transform-origin:0 0;text-decoration:underline;">View</div>
<div class="t" style="left:722px;top:428px;font-size:11px;line-height:12px;color:#000;">|</div>
<div class="t" style="left:726.5px;top:428px;font-size:11px;line-height:12px;color:#3462d8;transform:scaleX(0.9226);transform-origin:0 0;text-decoration:underline;">Edit</div>
<div class="t" style="left:747.5px;top:428px;font-size:11px;line-height:12px;color:#000;">|</div>
<div class="t" style="left:751.5px;top:428px;font-size:11px;line-height:12px;color:#3462d8;transform:scaleX(0.9506);transform-origin:0 0;text-decoration:underline;">Del</div>
<div class="r" style="left:156px;top:444px;width:56px;height:16px;background:#fff"></div>
<div class="r" style="left:214px;top:444px;width:75px;height:16px;background:#fff"></div>
<div class="r" style="left:291px;top:444px;width:46px;height:16px;background:#fff"></div>
<div class="r" style="left:339px;top:444px;width:91px;height:16px;background:#fff"></div>
<div class="r" style="left:432px;top:444px;width:72px;height:16px;background:#fff"></div>
<div class="r" style="left:506px;top:444px;width:91px;height:16px;background:#fff"></div>
<div class="r" style="left:599px;top:444px;width:91px;height:16px;background:#fff"></div>
<div class="r" style="left:692px;top:444px;width:92px;height:16px;background:#fff"></div>
<div class="t" style="left:156.5px;top:446px;font-size:11px;line-height:12px;color:#000;transform:scaleX(0.9477);transform-origin:0 0;">042</div>
<div class="t" style="left:214px;top:446px;font-size:11px;line-height:12px;color:#000;">6/23/2005</div>
<div class="t" style="left:292.5px;top:446px;font-size:11px;line-height:12px;color:#000;">Active</div>
<div class="t" style="left:339.5px;top:446px;font-size:11px;line-height:12px;color:#3462d8;transform:scaleX(1.1075);transform-origin:0 0;text-decoration:underline;">View</div>
<div class="t" style="left:369px;top:446px;font-size:11px;line-height:12px;color:#000;">|</div>
<div class="t" style="left:373.5px;top:446px;font-size:11px;line-height:12px;color:#3462d8;transform:scaleX(0.9226);transform-origin:0 0;text-decoration:underline;">Edit</div>
<div class="t" style="left:394.5px;top:446px;font-size:11px;line-height:12px;color:#000;">|</div>
<div class="t" style="left:398.5px;top:446px;font-size:11px;line-height:12px;color:#3462d8;transform:scaleX(0.9506);transform-origin:0 0;text-decoration:underline;">Del</div>
<div class="t" style="left:432px;top:446px;font-size:11px;line-height:12px;color:#000;">N/A</div>
<div class="t" style="left:506.5px;top:446px;font-size:11px;line-height:12px;color:#3462d8;transform:scaleX(1.1075);transform-origin:0 0;text-decoration:underline;">View</div>
<div class="t" style="left:536px;top:446px;font-size:11px;line-height:12px;color:#000;">|</div>
<div class="t" style="left:540.5px;top:446px;font-size:11px;line-height:12px;color:#3462d8;transform:scaleX(0.9226);transform-origin:0 0;text-decoration:underline;">Edit</div>
<div class="t" style="left:561.5px;top:446px;font-size:11px;line-height:12px;color:#000;">|</div>
<div class="t" style="left:565.5px;top:446px;font-size:11px;line-height:12px;color:#3462d8;transform:scaleX(0.9506);transform-origin:0 0;text-decoration:underline;">Del</div>
<div class="t" style="left:599.5px;top:446px;font-size:11px;line-height:12px;color:#3462d8;transform:scaleX(1.0318);transform-origin:0 0;text-decoration:underline;">Add</div>
<div class="t" style="left:692.5px;top:446px;font-size:11px;line-height:12px;color:#3462d8;transform:scaleX(1.0318);transform-origin:0 0;text-decoration:underline;">Add</div>
<div class="r" style="left:156px;top:462px;width:56px;height:16px;background:#fff"></div>
<div class="r" style="left:214px;top:462px;width:75px;height:16px;background:#fff"></div>
<div class="r" style="left:291px;top:462px;width:46px;height:16px;background:#fff"></div>
<div class="r" style="left:339px;top:462px;width:91px;height:16px;background:#fff"></div>
<div class="r" style="left:432px;top:462px;width:72px;height:16px;background:#fff"></div>
<div class="r" style="left:506px;top:462px;width:91px;height:16px;background:#fff"></div>
<div class="r" style="left:599px;top:462px;width:91px;height:16px;background:#fff"></div>
<div class="r" style="left:692px;top:462px;width:92px;height:16px;background:#fff"></div>
<div class="t" style="left:156.5px;top:464px;font-size:11px;line-height:12px;color:#000;transform:scaleX(0.9477);transform-origin:0 0;">091</div>
<div class="t" style="left:214px;top:464px;font-size:11px;line-height:12px;color:#000;">8/23/2005</div>
<div class="t" style="left:292.5px;top:464px;font-size:11px;line-height:12px;color:#000;">Active</div>
<div class="t" style="left:339.5px;top:464px;font-size:11px;line-height:12px;color:#3462d8;transform:scaleX(1.1075);transform-origin:0 0;text-decoration:underline;">View</div>
<div class="t" style="left:369px;top:464px;font-size:11px;line-height:12px;color:#000;">|</div>
<div class="t" style="left:373.5px;top:464px;font-size:11px;line-height:12px;color:#3462d8;transform:scaleX(0.9226);transform-origin:0 0;text-decoration:underline;">Edit</div>
<div class="t" style="left:394.5px;top:464px;font-size:11px;line-height:12px;color:#000;">|</div>
<div class="t" style="left:398.5px;top:464px;font-size:11px;line-height:12px;color:#3462d8;transform:scaleX(0.9506);transform-origin:0 0;text-decoration:underline;">Del</div>
<div class="t" style="left:432px;top:464px;font-size:11px;line-height:12px;color:#000;">N/A</div>
<div class="t" style="left:506.5px;top:464px;font-size:11px;line-height:12px;color:#3462d8;transform:scaleX(1.1075);transform-origin:0 0;text-decoration:underline;">View</div>
<div class="t" style="left:536px;top:464px;font-size:11px;line-height:12px;color:#000;">|</div>
<div class="t" style="left:540.5px;top:464px;font-size:11px;line-height:12px;color:#3462d8;transform:scaleX(0.9226);transform-origin:0 0;text-decoration:underline;">Edit</div>
<div class="t" style="left:561.5px;top:464px;font-size:11px;line-height:12px;color:#000;">|</div>
<div class="t" style="left:565.5px;top:464px;font-size:11px;line-height:12px;color:#3462d8;transform:scaleX(0.9506);transform-origin:0 0;text-decoration:underline;">Del</div>
<div class="t" style="left:599.5px;top:464px;font-size:11px;line-height:12px;color:#3462d8;transform:scaleX(1.0318);transform-origin:0 0;text-decoration:underline;">Add</div>
<div class="t" style="left:692.5px;top:464px;font-size:11px;line-height:12px;color:#3462d8;transform:scaleX(1.0318);transform-origin:0 0;text-decoration:underline;">Add</div>
<div class="r" style="left:156px;top:480px;width:56px;height:16px;background:#fff"></div>
<div class="r" style="left:214px;top:480px;width:75px;height:16px;background:#fff"></div>
<div class="r" style="left:291px;top:480px;width:46px;height:16px;background:#fff"></div>
<div class="r" style="left:339px;top:480px;width:91px;height:16px;background:#fff"></div>
<div class="r" style="left:432px;top:480px;width:72px;height:16px;background:#fff"></div>
<div class="r" style="left:506px;top:480px;width:91px;height:16px;background:#fff"></div>
<div class="r" style="left:599px;top:480px;width:91px;height:16px;background:#fff"></div>
<div class="r" style="left:692px;top:480px;width:92px;height:16px;background:#fff"></div>
<div class="t" style="left:156.5px;top:482px;font-size:11px;line-height:12px;color:#000;transform:scaleX(0.9916);transform-origin:0 0;">116</div>
<div class="t" style="left:214px;top:482px;font-size:11px;line-height:12px;color:#000;">4/29/2004</div>
<div class="t" style="left:292.5px;top:482px;font-size:11px;line-height:12px;color:#000;">Active</div>
<div class="t" style="left:339.5px;top:482px;font-size:11px;line-height:12px;color:#3462d8;transform:scaleX(1.1075);transform-origin:0 0;text-decoration:underline;">View</div>
<div class="t" style="left:369px;top:482px;font-size:11px;line-height:12px;color:#000;">|</div>
<div class="t" style="left:373.5px;top:482px;font-size:11px;line-height:12px;color:#3462d8;transform:scaleX(0.9226);transform-origin:0 0;text-decoration:underline;">Edit</div>
<div class="t" style="left:394.5px;top:482px;font-size:11px;line-height:12px;color:#000;">|</div>
<div class="t" style="left:398.5px;top:482px;font-size:11px;line-height:12px;color:#3462d8;transform:scaleX(0.9506);transform-origin:0 0;text-decoration:underline;">Del</div>
<div class="t" style="left:432px;top:482px;font-size:11px;line-height:12px;color:#000;">N/A</div>
<div class="t" style="left:506.5px;top:482px;font-size:11px;line-height:12px;color:#3462d8;transform:scaleX(1.1075);transform-origin:0 0;text-decoration:underline;">View</div>
<div class="t" style="left:536px;top:482px;font-size:11px;line-height:12px;color:#000;">|</div>
<div class="t" style="left:540.5px;top:482px;font-size:11px;line-height:12px;color:#3462d8;transform:scaleX(0.9226);transform-origin:0 0;text-decoration:underline;">Edit</div>
<div class="t" style="left:561.5px;top:482px;font-size:11px;line-height:12px;color:#000;">|</div>
<div class="t" style="left:565.5px;top:482px;font-size:11px;line-height:12px;color:#3462d8;transform:scaleX(0.9506);transform-origin:0 0;text-decoration:underline;">Del</div>
<div class="t" style="left:599.5px;top:482px;font-size:11px;line-height:12px;color:#3462d8;transform:scaleX(1.1075);transform-origin:0 0;text-decoration:underline;">View</div>
<div class="t" style="left:629px;top:482px;font-size:11px;line-height:12px;color:#000;">|</div>
<div class="t" style="left:633.5px;top:482px;font-size:11px;line-height:12px;color:#3462d8;transform:scaleX(0.9226);transform-origin:0 0;text-decoration:underline;">Edit</div>
<div class="t" style="left:654.5px;top:482px;font-size:11px;line-height:12px;color:#000;">|</div>
<div class="t" style="left:658.5px;top:482px;font-size:11px;line-height:12px;color:#3462d8;transform:scaleX(0.9506);transform-origin:0 0;text-decoration:underline;">Del</div>
<div class="t" style="left:692.5px;top:482px;font-size:11px;line-height:12px;color:#3462d8;transform:scaleX(1.1075);transform-origin:0 0;text-decoration:underline;">View</div>
<div class="t" style="left:722px;top:482px;font-size:11px;line-height:12px;color:#000;">|</div>
<div class="t" style="left:726.5px;top:482px;font-size:11px;line-height:12px;color:#3462d8;transform:scaleX(0.9226);transform-origin:0 0;text-decoration:underline;">Edit</div>
<div class="t" style="left:747.5px;top:482px;font-size:11px;line-height:12px;color:#000;">|</div>
<div class="t" style="left:751.5px;top:482px;font-size:11px;line-height:12px;color:#3462d8;transform:scaleX(0.9506);transform-origin:0 0;text-decoration:underline;">Del</div>
<div class="r" style="left:156px;top:498px;width:56px;height:16px;background:#fff"></div>
<div class="r" style="left:214px;top:498px;width:75px;height:16px;background:#fff"></div>
<div class="r" style="left:291px;top:498px;width:46px;height:16px;background:#fff"></div>
<div class="r" style="left:339px;top:498px;width:91px;height:16px;background:#fff"></div>
<div class="r" style="left:432px;top:498px;width:72px;height:16px;background:#fff"></div>
<div class="r" style="left:506px;top:498px;width:91px;height:16px;background:#fff"></div>
<div class="r" style="left:599px;top:498px;width:91px;height:16px;background:#fff"></div>
<div class="r" style="left:692px;top:498px;width:92px;height:16px;background:#fff"></div>
<div class="t" style="left:156.5px;top:500px;font-size:11px;line-height:12px;color:#000;transform:scaleX(0.9477);transform-origin:0 0;">121</div>
<div class="t" style="left:214px;top:500px;font-size:11px;line-height:12px;color:#000;">5/12/2004</div>
<div class="t" style="left:292.5px;top:500px;font-size:11px;line-height:12px;color:#000;">Active</div>
<div class="t" style="left:339.5px;top:500px;font-size:11px;line-height:12px;color:#3462d8;transform:scaleX(1.1075);transform-origin:0 0;text-decoration:underline;">View</div>
<div class="t" style="left:369px;top:500px;font-size:11px;line-height:12px;color:#000;">|</div>
<div class="t" style="left:373.5px;top:500px;font-size:11px;line-height:12px;color:#3462d8;transform:scaleX(0.9226);transform-origin:0 0;text-decoration:underline;">Edit</div>
<div class="t" style="left:394.5px;top:500px;font-size:11px;line-height:12px;color:#000;">|</div>
<div class="t" style="left:398.5px;top:500px;font-size:11px;line-height:12px;color:#3462d8;transform:scaleX(0.9506);transform-origin:0 0;text-decoration:underline;">Del</div>
<div class="t" style="left:432px;top:500px;font-size:11px;line-height:12px;color:#000;">N/A</div>
<div class="t" style="left:506.5px;top:500px;font-size:11px;line-height:12px;color:#3462d8;transform:scaleX(1.1075);transform-origin:0 0;text-decoration:underline;">View</div>
<div class="t" style="left:536px;top:500px;font-size:11px;line-height:12px;color:#000;">|</div>
<div class="t" style="left:540.5px;top:500px;font-size:11px;line-height:12px;color:#3462d8;transform:scaleX(0.9226);transform-origin:0 0;text-decoration:underline;">Edit</div>
<div class="t" style="left:561.5px;top:500px;font-size:11px;line-height:12px;color:#000;">|</div>
<div class="t" style="left:565.5px;top:500px;font-size:11px;line-height:12px;color:#3462d8;transform:scaleX(0.9506);transform-origin:0 0;text-decoration:underline;">Del</div>
<div class="t" style="left:599.5px;top:500px;font-size:11px;line-height:12px;color:#3462d8;transform:scaleX(1.1075);transform-origin:0 0;text-decoration:underline;">View</div>
<div class="t" style="left:629px;top:500px;font-size:11px;line-height:12px;color:#000;">|</div>
<div class="t" style="left:633.5px;top:500px;font-size:11px;line-height:12px;color:#3462d8;transform:scaleX(0.9226);transform-origin:0 0;text-decoration:underline;">Edit</div>
<div class="t" style="left:654.5px;top:500px;font-size:11px;line-height:12px;color:#000;">|</div>
<div class="t" style="left:658.5px;top:500px;font-size:11px;line-height:12px;color:#3462d8;transform:scaleX(0.9506);transform-origin:0 0;text-decoration:underline;">Del</div>
<div class="t" style="left:692.5px;top:500px;font-size:11px;line-height:12px;color:#3462d8;transform:scaleX(1.1075);transform-origin:0 0;text-decoration:underline;">View</div>
<div class="t" style="left:722px;top:500px;font-size:11px;line-height:12px;color:#000;">|</div>
<div class="t" style="left:726.5px;top:500px;font-size:11px;line-height:12px;color:#3462d8;transform:scaleX(0.9226);transform-origin:0 0;text-decoration:underline;">Edit</div>
<div class="t" style="left:747.5px;top:500px;font-size:11px;line-height:12px;color:#000;">|</div>
<div class="t" style="left:751.5px;top:500px;font-size:11px;line-height:12px;color:#3462d8;transform:scaleX(0.9506);transform-origin:0 0;text-decoration:underline;">Del</div>
<div class="r" style="left:156px;top:516px;width:56px;height:16px;background:#fff"></div>
<div class="r" style="left:214px;top:516px;width:75px;height:16px;background:#fff"></div>
<div class="r" style="left:291px;top:516px;width:46px;height:16px;background:#fff"></div>
<div class="r" style="left:339px;top:516px;width:91px;height:16px;background:#fff"></div>
<div class="r" style="left:432px;top:516px;width:72px;height:16px;background:#fff"></div>
<div class="r" style="left:506px;top:516px;width:91px;height:16px;background:#fff"></div>
<div class="r" style="left:599px;top:516px;width:91px;height:16px;background:#fff"></div>
<div class="r" style="left:692px;top:516px;width:92px;height:16px;background:#fff"></div>
<div class="t" style="left:156.5px;top:518px;font-size:11px;line-height:12px;color:#000;transform:scaleX(0.9477);transform-origin:0 0;">123</div>
<div class="t" style="left:214px;top:518px;font-size:11px;line-height:12px;color:#000;">5/27/2004</div>
<div class="t" style="left:292.5px;top:518px;font-size:11px;line-height:12px;color:#000;">Active</div>
<div class="t" style="left:339.5px;top:518px;font-size:11px;line-height:12px;color:#3462d8;transform:scaleX(1.1075);transform-origin:0 0;text-decoration:underline;">View</div>
<div class="t" style="left:369px;top:518px;font-size:11px;line-height:12px;color:#000;">|</div>
<div class="t" style="left:373.5px;top:518px;font-size:11px;line-height:12px;color:#3462d8;transform:scaleX(0.9226);transform-origin:0 0;text-decoration:underline;">Edit</div>
<div class="t" style="left:394.5px;top:518px;font-size:11px;line-height:12px;color:#000;">|</div>
<div class="t" style="left:398.5px;top:518px;font-size:11px;line-height:12px;color:#3462d8;transform:scaleX(0.9506);transform-origin:0 0;text-decoration:underline;">Del</div>
<div class="t" style="left:432px;top:518px;font-size:11px;line-height:12px;color:#000;">N/A</div>
<div class="t" style="left:506.5px;top:518px;font-size:11px;line-height:12px;color:#3462d8;transform:scaleX(1.1075);transform-origin:0 0;text-decoration:underline;">View</div>
<div class="t" style="left:536px;top:518px;font-size:11px;line-height:12px;color:#000;">|</div>
<div class="t" style="left:540.5px;top:518px;font-size:11px;line-height:12px;color:#3462d8;transform:scaleX(0.9226);transform-origin:0 0;text-decoration:underline;">Edit</div>
<div class="t" style="left:561.5px;top:518px;font-size:11px;line-height:12px;color:#000;">|</div>
<div class="t" style="left:565.5px;top:518px;font-size:11px;line-height:12px;color:#3462d8;transform:scaleX(0.9506);transform-origin:0 0;text-decoration:underline;">Del</div>
<div class="t" style="left:599.5px;top:518px;font-size:11px;line-height:12px;color:#3462d8;transform:scaleX(1.0318);transform-origin:0 0;text-decoration:underline;">Add</div>
<div class="t" style="left:692.5px;top:518px;font-size:11px;line-height:12px;color:#3462d8;transform:scaleX(1.1075);transform-origin:0 0;text-decoration:underline;">View</div>
<div class="t" style="left:722px;top:518px;font-size:11px;line-height:12px;color:#000;">|</div>
<div class="t" style="left:726.5px;top:518px;font-size:11px;line-height:12px;color:#3462d8;transform:scaleX(0.9226);transform-origin:0 0;text-decoration:underline;">Edit</div>
<div class="t" style="left:747.5px;top:518px;font-size:11px;line-height:12px;color:#000;">|</div>
<div class="t" style="left:751.5px;top:518px;font-size:11px;line-height:12px;color:#3462d8;transform:scaleX(0.9506);transform-origin:0 0;text-decoration:underline;">Del</div>
<div class="r" style="left:156px;top:534px;width:56px;height:16px;background:#fff"></div>
<div class="r" style="left:214px;top:534px;width:75px;height:16px;background:#fff"></div>
<div class="r" style="left:291px;top:534px;width:46px;height:16px;background:#fff"></div>
<div class="r" style="left:339px;top:534px;width:91px;height:16px;background:#fff"></div>
<div class="r" style="left:432px;top:534px;width:72px;height:16px;background:#fff"></div>
<div class="r" style="left:506px;top:534px;width:91px;height:16px;background:#fff"></div>
<div class="r" style="left:599px;top:534px;width:91px;height:16px;background:#fff"></div>
<div class="r" style="left:692px;top:534px;width:92px;height:16px;background:#fff"></div>
<div class="t" style="left:156.5px;top:536px;font-size:11px;line-height:12px;color:#000;transform:scaleX(0.9477);transform-origin:0 0;">124</div>
<div class="t" style="left:214px;top:536px;font-size:11px;line-height:12px;color:#000;">6/14/2004</div>
<div class="t" style="left:292.5px;top:536px;font-size:11px;line-height:12px;color:#000;">Active</div>
<div class="t" style="left:339.5px;top:536px;font-size:11px;line-height:12px;color:#3462d8;transform:scaleX(1.1075);transform-origin:0 0;text-decoration:underline;">View</div>
<div class="t" style="left:369px;top:536px;font-size:11px;line-height:12px;color:#000;">|</div>
<div class="t" style="left:373.5px;top:536px;font-size:11px;line-height:12px;color:#3462d8;transform:scaleX(0.9226);transform-origin:0 0;text-decoration:underline;">Edit</div>
<div class="t" style="left:394.5px;top:536px;font-size:11px;line-height:12px;color:#000;">|</div>
<div class="t" style="left:398.5px;top:536px;font-size:11px;line-height:12px;color:#3462d8;transform:scaleX(0.9506);transform-origin:0 0;text-decoration:underline;">Del</div>
<div class="t" style="left:432px;top:536px;font-size:11px;line-height:12px;color:#000;">N/A</div>
<div class="t" style="left:506.5px;top:536px;font-size:11px;line-height:12px;color:#3462d8;transform:scaleX(1.1075);transform-origin:0 0;text-decoration:underline;">View</div>
<div class="t" style="left:536px;top:536px;font-size:11px;line-height:12px;color:#000;">|</div>
<div class="t" style="left:540.5px;top:536px;font-size:11px;line-height:12px;color:#3462d8;transform:scaleX(0.9226);transform-origin:0 0;text-decoration:underline;">Edit</div>
<div class="t" style="left:561.5px;top:536px;font-size:11px;line-height:12px;color:#000;">|</div>
<div class="t" style="left:565.5px;top:536px;font-size:11px;line-height:12px;color:#3462d8;transform:scaleX(0.9506);transform-origin:0 0;text-decoration:underline;">Del</div>
<div class="t" style="left:599.5px;top:536px;font-size:11px;line-height:12px;color:#3462d8;transform:scaleX(1.1075);transform-origin:0 0;text-decoration:underline;">View</div>
<div class="t" style="left:629px;top:536px;font-size:11px;line-height:12px;color:#000;">|</div>
<div class="t" style="left:633.5px;top:536px;font-size:11px;line-height:12px;color:#3462d8;transform:scaleX(0.9226);transform-origin:0 0;text-decoration:underline;">Edit</div>
<div class="t" style="left:654.5px;top:536px;font-size:11px;line-height:12px;color:#000;">|</div>
<div class="t" style="left:658.5px;top:536px;font-size:11px;line-height:12px;color:#3462d8;transform:scaleX(0.9506);transform-origin:0 0;text-decoration:underline;">Del</div>
<div class="t" style="left:692.5px;top:536px;font-size:11px;line-height:12px;color:#3462d8;transform:scaleX(1.1075);transform-origin:0 0;text-decoration:underline;">View</div>
<div class="t" style="left:722px;top:536px;font-size:11px;line-height:12px;color:#000;">|</div>
<div class="t" style="left:726.5px;top:536px;font-size:11px;line-height:12px;color:#3462d8;transform:scaleX(0.9226);transform-origin:0 0;text-decoration:underline;">Edit</div>
<div class="t" style="left:747.5px;top:536px;font-size:11px;line-height:12px;color:#000;">|</div>
<div class="t" style="left:751.5px;top:536px;font-size:11px;line-height:12px;color:#3462d8;transform:scaleX(0.9506);transform-origin:0 0;text-decoration:underline;">Del</div>
<div class="r" style="left:156px;top:552px;width:56px;height:16px;background:#fff"></div>
<div class="r" style="left:214px;top:552px;width:75px;height:16px;background:#fff"></div>
<div class="r" style="left:291px;top:552px;width:46px;height:16px;background:#fff"></div>
<div class="r" style="left:339px;top:552px;width:91px;height:16px;background:#fff"></div>
<div class="r" style="left:432px;top:552px;width:72px;height:16px;background:#fff"></div>
<div class="r" style="left:506px;top:552px;width:91px;height:16px;background:#fff"></div>
<div class="r" style="left:599px;top:552px;width:91px;height:16px;background:#fff"></div>
<div class="r" style="left:692px;top:552px;width:92px;height:16px;background:#fff"></div>
<div class="t" style="left:156.5px;top:554px;font-size:11px;line-height:12px;color:#000;transform:scaleX(0.9477);transform-origin:0 0;">125</div>
<div class="t" style="left:214px;top:554px;font-size:11px;line-height:12px;color:#000;">6/22/2004</div>
<div class="t" style="left:292.5px;top:554px;font-size:11px;line-height:12px;color:#000;">Active</div>
<div class="t" style="left:339.5px;top:554px;font-size:11px;line-height:12px;color:#3462d8;transform:scaleX(1.1075);transform-origin:0 0;text-decoration:underline;">View</div>
<div class="t" style="left:369px;top:554px;font-size:11px;line-height:12px;color:#000;">|</div>
<div class="t" style="left:373.5px;top:554px;font-size:11px;line-height:12px;color:#3462d8;transform:scaleX(0.9226);transform-origin:0 0;text-decoration:underline;">Edit</div>
<div class="t" style="left:394.5px;top:554px;font-size:11px;line-height:12px;color:#000;">|</div>
<div class="t" style="left:398.5px;top:554px;font-size:11px;line-height:12px;color:#3462d8;transform:scaleX(0.9506);transform-origin:0 0;text-decoration:underline;">Del</div>
<div class="t" style="left:432px;top:554px;font-size:11px;line-height:12px;color:#000;">N/A</div>
<div class="t" style="left:506.5px;top:554px;font-size:11px;line-height:12px;color:#3462d8;transform:scaleX(1.1075);transform-origin:0 0;text-decoration:underline;">View</div>
<div class="t" style="left:536px;top:554px;font-size:11px;line-height:12px;color:#000;">|</div>
<div class="t" style="left:540.5px;top:554px;font-size:11px;line-height:12px;color:#3462d8;transform:scaleX(0.9226);transform-origin:0 0;text-decoration:underline;">Edit</div>
<div class="t" style="left:561.5px;top:554px;font-size:11px;line-height:12px;color:#000;">|</div>
<div class="t" style="left:565.5px;top:554px;font-size:11px;line-height:12px;color:#3462d8;transform:scaleX(0.9506);transform-origin:0 0;text-decoration:underline;">Del</div>
<div class="t" style="left:599.5px;top:554px;font-size:11px;line-height:12px;color:#3462d8;transform:scaleX(1.1075);transform-origin:0 0;text-decoration:underline;">View</div>
<div class="t" style="left:629px;top:554px;font-size:11px;line-height:12px;color:#000;">|</div>
<div class="t" style="left:633.5px;top:554px;font-size:11px;line-height:12px;color:#3462d8;transform:scaleX(0.9226);transform-origin:0 0;text-decoration:underline;">Edit</div>
<div class="t" style="left:654.5px;top:554px;font-size:11px;line-height:12px;color:#000;">|</div>
<div class="t" style="left:658.5px;top:554px;font-size:11px;line-height:12px;color:#3462d8;transform:scaleX(0.9506);transform-origin:0 0;text-decoration:underline;">Del</div>
<div class="t" style="left:692.5px;top:554px;font-size:11px;line-height:12px;color:#3462d8;transform:scaleX(1.1075);transform-origin:0 0;text-decoration:underline;">View</div>
<div class="t" style="left:722px;top:554px;font-size:11px;line-height:12px;color:#000;">|</div>
<div class="t" style="left:726.5px;top:554px;font-size:11px;line-height:12px;color:#3462d8;transform:scaleX(0.9226);transform-origin:0 0;text-decoration:underline;">Edit</div>
<div class="t" style="left:747.5px;top:554px;font-size:11px;line-height:12px;color:#000;">|</div>
<div class="t" style="left:751.5px;top:554px;font-size:11px;line-height:12px;color:#3462d8;transform:scaleX(0.9506);transform-origin:0 0;text-decoration:underline;">Del</div>
</div>
<div class="r" style="left:786px;top:370px;width:17px;height:190px;background:#fbfbf4;border-left:1px solid #eeede5"></div>
<div class="r" style="left:788px;top:371px;width:13px;height:14px;border-radius:2px;box-shadow:0 1px 0 #fff,0 2px 0 #88a4dc;background:linear-gradient(135deg,#dce6fd,#b7cbfa 60%,#c8dafe)"><svg class="r" style="left:0;top:0" width="13" height="14"><path d="M3 8.5 L6.5 5 L10 8.5" fill="none" stroke="#4d6185" stroke-width="2"/></svg></div>
<div class="r" style="left:788px;top:388px;width:13px;height:8px;border-radius:2px;box-shadow:0 1px 0 #fff,0 2px 0 #88a4dc;background:linear-gradient(to right,#c8d8fc,#dce6fd 40%,#dce6fd 60%,#bcd0fb)"><div class="r" style="left:4px;top:1px;width:6px;height:1px;background:#88a8f0;box-shadow:0 2px 0 #88a8f0,0 4px 0 #88a8f0,0 6px 0 #88a8f0"></div></div>
<div class="r" style="left:788px;top:544px;width:13px;height:14px;border-radius:2px;box-shadow:0 1px 0 #fff,0 2px 0 #88a4dc;background:linear-gradient(135deg,#dce6fd,#b7cbfa 60%,#c8dafe)"><svg class="r" style="left:0;top:0" width="13" height="14"><path d="M3 5.5 L6.5 9 L10 5.5" fill="none" stroke="#4d6185" stroke-width="2"/></svg></div>
<div class="r" style="left:445px;top:501px;width:62px;height:15px;background:#ffffe1;border:1px solid #000"></div>
<div class="t" style="left:447px;top:504px;font-size:11px;line-height:12px;color:#000;transform:scaleX(0.9930);transform-origin:0 0;">For 3 Month</div>
</body></html>
